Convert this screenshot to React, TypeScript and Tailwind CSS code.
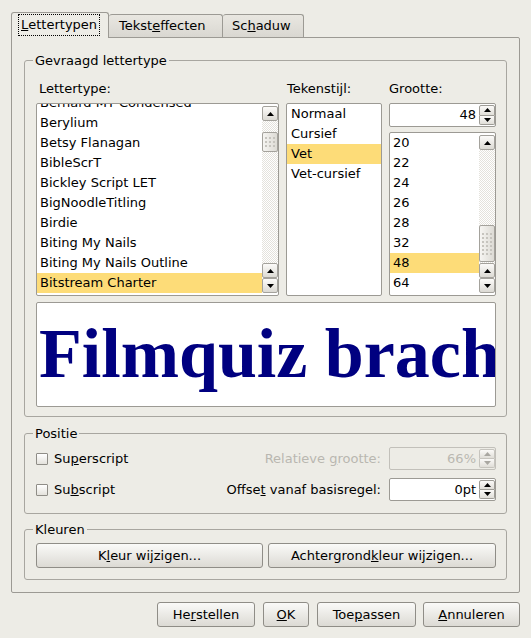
import React from 'react';

type Dir = 'up' | 'down';

function Arrow({ dir, color = '#000000' }: { dir: Dir; color?: string }) {
  return (
    <svg width="7" height="4" viewBox="0 0 7 4" className="block">
      {dir === 'up' ? <path d="M3.5 0L7 4H0Z" fill={color} /> : <path d="M0 0H7L3.5 4Z" fill={color} />}
    </svg>
  );
}

function ScrollButton({ dir }: { dir: Dir }) {
  return (
    <div className="flex h-[15px] w-full shrink-0 items-center justify-center rounded-[2px] border border-[#a4a29c] bg-linear-to-b from-[#fcfbf9] to-[#dcdad4]">
      <Arrow dir={dir} />
    </div>
  );
}

function Grip({ rows }: { rows: number }) {
  return (
    <div className="grid grid-cols-3 gap-[2px]">
      {Array.from({ length: rows * 3 }).map((_, i) => (
        <div key={i} className="h-[2px] w-[2px] bg-[#c6c4be]" />
      ))}
    </div>
  );
}

function Scrollbar({ thumbClass, rows }: { thumbClass: string; rows: number }) {
  return (
    <div className="flex w-[16px] shrink-0 flex-col py-[2px]">
      <ScrollButton dir="up" />
      <div className="flex-1 bg-[image:repeating-conic-gradient(#e4e2dc_0%_25%,#ffffff_0%_50%)] bg-[length:2px_2px]">
        <div
          className={`flex w-full items-center justify-center rounded-[2px] border border-[#a4a29c] bg-linear-to-r from-[#f6f5f2] to-[#dddbd5] ${thumbClass}`}
        >
          <Grip rows={rows} />
        </div>
      </div>
      <ScrollButton dir="up" />
      <ScrollButton dir="down" />
    </div>
  );
}

function Item({ text, selected, pad }: { text: string; selected?: boolean; pad: string }) {
  return (
    <div className={`h-[20px] shrink-0 whitespace-nowrap leading-[20px] ${pad} ${selected ? 'bg-[#fddc78]' : ''}`}>
      {text}
    </div>
  );
}

function SpinButtons({ disabled }: { disabled?: boolean }) {
  const c = disabled ? '#a9a7a1' : '#000000';
  const b = disabled ? 'border-[#c6c4be]' : 'border-[#9e9c96]';
  return (
    <div className="flex w-[16px] shrink-0 flex-col py-[1px]">
      <div className={`flex flex-1 items-center justify-center rounded-t-[2px] border ${b} bg-linear-to-b from-[#fbfaf8] to-[#e0ded8]`}>
        <Arrow dir="up" color={c} />
      </div>
      <div className={`flex flex-1 items-center justify-center rounded-b-[2px] border border-t-0 ${b} bg-linear-to-b from-[#fbfaf8] to-[#e0ded8]`}>
        <Arrow dir="down" color={c} />
      </div>
    </div>
  );
}

function Spin({ value, disabled, h }: { value: string; disabled?: boolean; h: string }) {
  return (
    <div
      className={`flex w-[107px] rounded-[2px] border ${h} ${
        disabled ? 'border-[#c2c0ba] bg-[#edece6] text-[#bab8b1]' : 'border-[#9c9a94] bg-white text-black'
      }`}
    >
      <div className="flex flex-1 items-center justify-end pr-[3px]">{value}</div>
      <SpinButtons disabled={disabled} />
    </div>
  );
}

function Group({ label, className, children }: { label: string; className: string; children: React.ReactNode }) {
  return (
    <div className={`relative ml-[12px] w-[483px] rounded-[3px] border border-[#a8a6a0] ${className}`}>
      <span className="absolute left-[8px] top-[-8px] bg-[#edece6] px-[2px] leading-[15px]">{label}</span>
      {children}
    </div>
  );
}

function Btn({ className, children }: { className: string; children: React.ReactNode }) {
  return (
    <div
      className={`flex h-[25px] shrink-0 items-center justify-center rounded-[3px] border border-[#8f8d87] bg-linear-to-b from-[#fafaf8] to-[#dcdad4] ${className}`}
    >
      <span>{children}</span>
    </div>
  );
}

function Check() {
  return (
    <div className="h-[12px] w-[12px] shrink-0 rounded-[1px] border border-[#8f8d87] bg-linear-to-b from-[#ffffff] to-[#e4e2dc]" />
  );
}

export default function App() {
  const fonts = [
    'Bernard MT Condensed',
    'Berylium',
    'Betsy Flanagan',
    'BibleScrT',
    'Bickley Script LET',
    'BigNoodleTitling',
    'Birdie',
    'Biting My Nails',
    'Biting My Nails Outline',
    'Bitstream Charter',
  ];
  const styles = ['Normaal', 'Cursief', 'Vet', 'Vet-cursief'];
  const sizes = ['20', '22', '24', '26', '28', '32', '48', '64'];

  return (
    <div className="h-[638px] w-[531px] overflow-hidden bg-[#edece6] pl-[11px] pt-[12px] font-['DejaVu_Sans',sans-serif] text-[13px] text-black">
      {/* Tabs */}
      <div className="flex h-[25px] items-end">
        <div className="relative z-10 -mb-px flex h-[26px] w-[98px] items-start rounded-t-[3px] border border-b-0 border-[#9c9a94] bg-[#edece6] pl-[6px] pt-[1px]">
          <span className="flex h-[22px] items-center border border-dotted border-black px-[2px]">
            <u>L</u>ettertypen
          </span>
        </div>
        <div className="flex h-[23px] w-[114px] items-center rounded-t-[3px] border border-b-0 border-l-0 border-[#9c9a94] bg-linear-to-b from-[#e9e7e1] to-[#d9d7d1] pl-[10px]">
          Tekst<u>e</u>ffecten
        </div>
        <div className="flex h-[23px] w-[81px] items-center rounded-t-[3px] border border-b-0 border-l-0 border-[#9c9a94] bg-linear-to-b from-[#e9e7e1] to-[#d9d7d1] pl-[9px]">
          Sc<u>h</u>aduw
        </div>
      </div>

      {/* Panel */}
      <div className="w-[509px] rounded-b-[2px] rounded-tr-[2px] border border-[#9c9a94] pb-[12px]">
        <Group label="Gevraagd lettertype" className="mt-[22px]">
          <div className="pb-[9px] pl-[11px] pt-[20px]">
            <div className="flex gap-[7px]">
              {/* Font list */}
              <div className="flex w-[243px] flex-col">
                <div className="h-[15px] pl-[3px] leading-[15px]">Lettertype:</div>
                <div className="mt-[7px] flex h-[193px] overflow-hidden rounded-[2px] border border-[#9c9a94] bg-white">
                  <div className="flex flex-1 flex-col overflow-hidden">
                    <div className="mt-[-11px] flex flex-col">
                      {fonts.map((f) => (
                        <Item key={f} text={f} selected={f === 'Bitstream Charter'} pad="pl-[3px]" />
                      ))}
                    </div>
                  </div>
                  <Scrollbar thumbClass="mt-[11px] h-[20px]" rows={3} />
                </div>
              </div>
              {/* Style list */}
              <div className="flex w-[96px] flex-col">
                <div className="h-[15px] pl-[1px] leading-[15px]">Tekenstijl:</div>
                <div className="mt-[7px] flex h-[193px] flex-col overflow-hidden rounded-[2px] border border-[#9c9a94] bg-white">
                  {styles.map((s) => (
                    <Item key={s} text={s} selected={s === 'Vet'} pad="pl-[4px]" />
                  ))}
                </div>
              </div>
              {/* Size column */}
              <div className="flex w-[107px] flex-col">
                <div className="h-[15px] leading-[15px]">Grootte:</div>
                <div className="mt-[7px]">
                  <Spin value="48" h="h-[24px]" />
                </div>
                <div className="mt-[5px] flex h-[164px] overflow-hidden rounded-[2px] border border-[#9c9a94] bg-white">
                  <div className="flex flex-1 flex-col overflow-hidden">
                    {sizes.map((s) => (
                      <Item key={s} text={s} selected={s === '48'} pad="pl-[3px]" />
                    ))}
                  </div>
                  <Scrollbar thumbClass="mt-[75px] h-[37px]" rows={6} />
                </div>
              </div>
            </div>
            {/* Preview */}
            <div className="mt-[6px] h-[105px] w-[460px] overflow-hidden rounded-[2px] border border-[#9c9a94] bg-white pl-[2px] pt-[16px]">
              <div className="whitespace-nowrap font-['Liberation_Serif',serif] text-[70px] font-bold leading-[70px] text-[#000080]">
                Filmquiz bracht knappe ex-yogi van de wijs
              </div>
            </div>
          </div>
        </Group>

        <Group label="Positie" className="mt-[16px]">
          <div className="flex flex-col gap-[8px] pb-[12px] pl-[11px] pr-[10px] pt-[13px]">
            <div className="flex h-[23px] items-center justify-between">
              <div className="flex items-center">
                <Check />
                <span className="ml-[6px]">
                  Su<u>p</u>erscript
                </span>
              </div>
              <div className="flex items-center gap-[8px]">
                <span className="text-[#b9b7b0]">
                  Relatieve <u>g</u>rootte:
                </span>
                <Spin value="66%" disabled h="h-[23px]" />
              </div>
            </div>
            <div className="flex h-[23px] items-center justify-between">
              <div className="flex items-center">
                <Check />
                <span className="ml-[6px]">
                  Su<u>b</u>script
                </span>
              </div>
              <div className="flex items-center gap-[8px]">
                <span>
                  Offse<u>t</u> vanaf basisregel:
                </span>
                <Spin value="0pt" h="h-[23px]" />
              </div>
            </div>
          </div>
        </Group>

        <Group label="Kleuren" className="mt-[15px]">
          <div className="flex gap-[5px] pb-[11px] pl-[11px] pt-[13px]">
            <Btn className="w-[227px]">
              K<u>l</u>eur wijzigen...
            </Btn>
            <Btn className="w-[228px]">
              Achtergrond<u>k</u>leur wijzigen...
            </Btn>
          </div>
        </Group>
      </div>

      {/* Dialog buttons */}
      <div className="mt-[9px] flex w-[509px] justify-end">
        <Btn className="w-[98px]">
          He<u>r</u>stellen
        </Btn>
        <Btn className="ml-[8px] w-[46px]">
          <u>O</u>K
        </Btn>
        <Btn className="ml-[8px] w-[99px]">
          Toe<u>p</u>assen
        </Btn>
        <Btn className="ml-[7px] w-[97px]">
          <u>A</u>nnuleren
        </Btn>
      </div>
    </div>
  );
}
